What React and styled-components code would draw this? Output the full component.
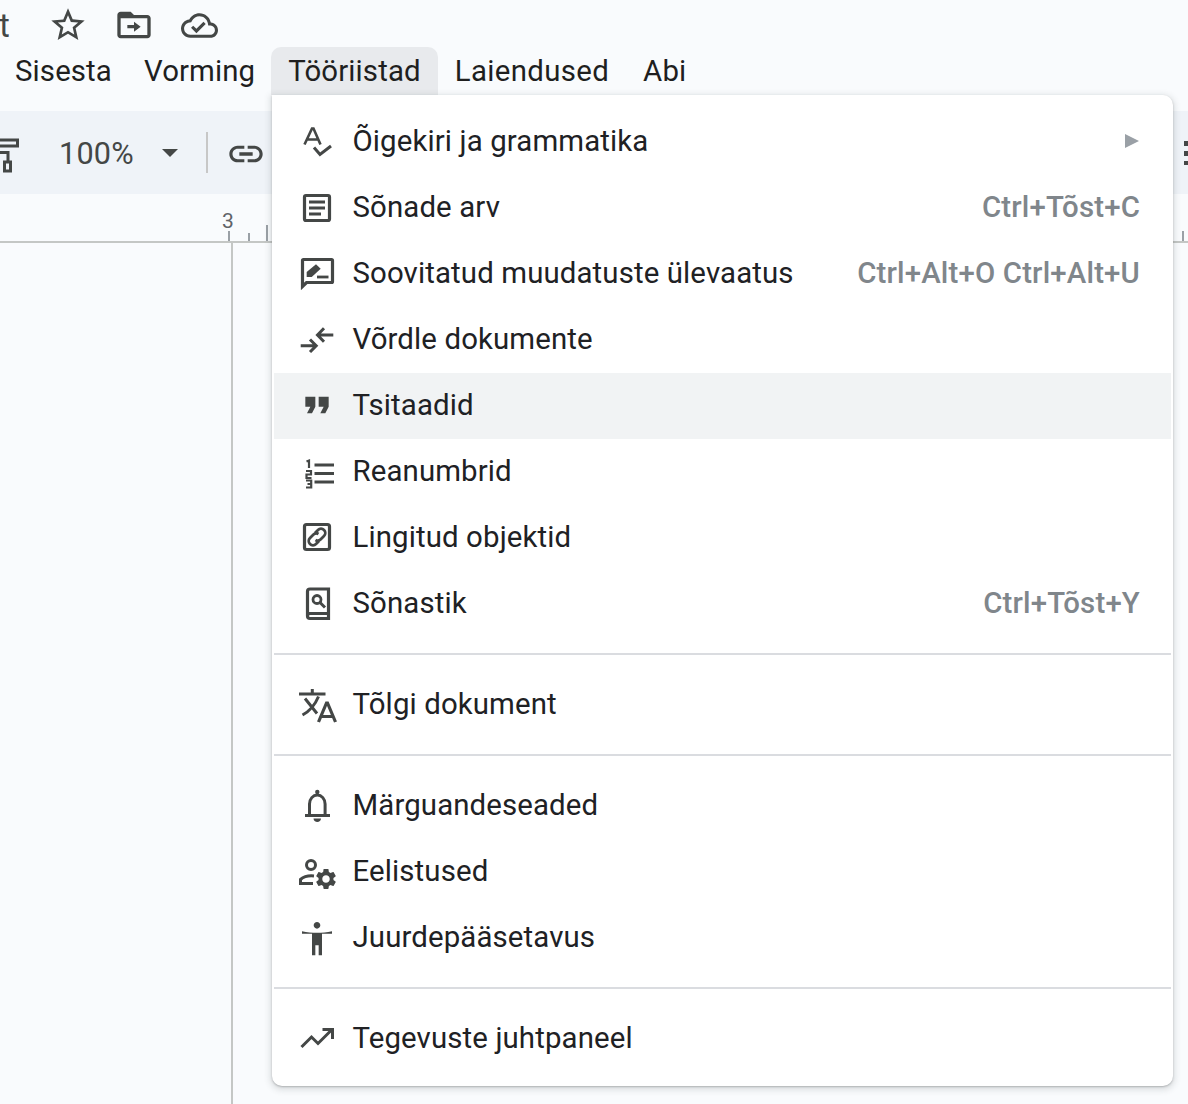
import React from "react";
import styled, { createGlobalStyle } from "styled-components";

const GlobalStyle = createGlobalStyle`
  html, body { margin: 0; padding: 0; background: #f9fbfd; }
  body { font-family: Roboto, "Liberation Sans", sans-serif; }
`;

// --- Page chrome ---
const Page = styled.div`
  position: relative;
  width: 1188px;
  height: 1104px;
  overflow: hidden;
  background: #f9fbfd;
  display: flex;
  flex-direction: column;
`;

const TitleRow = styled.div`
  height: 47px;
  padding-top: 3px;
  box-sizing: border-box;
  display: flex;
  align-items: center;
  flex: none;
`;

const TitleTail = styled.span`
  width: 49px;
  margin-left: -1px;
  font-size: 33px;
  color: #444746;
  flex: none;
`;

const TitleIcon = styled.svg`
  width: ${(p) => p.$w}px;
  height: ${(p) => p.$w}px;
  margin-right: ${(p) => p.$mr}px;
  fill: #444746;
  flex: none;
`;

const MenuBar = styled.div`
  height: 48px;
  margin-left: -1px;
  display: flex;
  flex: none;
`;

const MenuTab = styled.div`
  padding: 0 ${(p) => p.$pad}px;
  display: flex;
  align-items: center;
  font-size: 29.4px;
  letter-spacing: ${(p) => p.$ls}px;
  color: #1f1f1f;
  border-radius: 10px 10px 0 0;
  background: ${(p) => (p.$open ? "#e8eaed" : "transparent")};
`;

const Toolbar = styled.div`
  height: 83px;
  margin-top: 16px;
  background: #eff3f8;
  display: flex;
  align-items: center;
  flex: none;
  position: relative;
`;

const PaintIcon = styled.svg`
  width: 40px;
  height: 40px;
  margin-left: -20px;
  flex: none;
  fill: none;
  stroke: #444746;
  stroke-width: 3;
`;

const Zoom = styled.span`
  margin: 2px 0 0 39px;
  font-size: 30.6px;
  color: #444746;
  letter-spacing: 0.2px;
`;

const Caret = styled.i`
  margin-left: 28px;
  width: 0;
  height: 0;
  border-left: 8px solid transparent;
  border-right: 8px solid transparent;
  border-top: 8px solid #444746;
`;

const ToolDivider = styled.i`
  width: 2px;
  height: 41px;
  margin-left: 28px;
  background: #c7c7c7;
`;

const LinkIcon = styled.svg`
  width: 40px;
  height: 40px;
  margin: 2px 0 0 18px;
  fill: #444746;
  flex: none;
`;

const MoreDots = styled.i`
  margin-left: auto;
  width: 4px;
  height: 24px;
  background: repeating-linear-gradient(#444746 0 5px, transparent 5px 10px);
`;

const Ruler = styled.div`
  height: 47px;
  border-bottom: 2px solid #c4c7c5;
  display: flex;
  align-items: flex-end;
  flex: none;
`;

const RulerNumber = styled.span`
  width: 13px;
  margin-left: 222px;
  margin-bottom: 8px;
  font-size: 21px;
  color: #5f6368;
`;

const Tick = styled.i`
  width: 2px;
  height: ${(p) => p.$h}px;
  margin-left: ${(p) => p.$ml}px;
  background: #9aa0a6;
`;

const Canvas = styled.div`
  flex: 1;
  margin-left: 231px;
  border-left: 2px solid #c4c7c5;
`;

// --- Tools menu ---
const Menu = styled.div`
  position: absolute;
  top: 95px;
  left: 272px;
  width: 901px;
  height: 991px;
  padding: 14px 2px;
  box-sizing: border-box;
  background: #fff;
  border-radius: 0 10px 10px 10px;
  box-shadow: 0 2px 6px 2px rgba(60, 64, 67, 0.15), 0 1px 2px rgba(60, 64, 67, 0.3);
`;

const Item = styled.div`
  height: 66px;
  box-sizing: border-box;
  padding: 0 31px 2px 23px;
  display: flex;
  align-items: center;
  background: ${(p) => (p.$active ? "#f1f3f4" : "transparent")};
`;

const ItemIcon = styled.svg`
  width: 40px;
  height: 40px;
  margin-right: 15.5px;
  flex: none;
  fill: #444746;
`;

const Line = styled.path`
  fill: none;
  stroke: #444746;
  stroke-width: ${(p) => p.$w || 3}px;
`;

const ItemLabel = styled.span`
  flex: 1;
  font-size: 29.4px;
  letter-spacing: 0.12px;
  color: #202124;
  white-space: nowrap;
`;

const Shortcut = styled.span`
  font-size: 29.4px;
  font-weight: 500;
  letter-spacing: 0.17px;
  color: #80868b;
  white-space: nowrap;
`;

const SubArrow = styled.i`
  width: 0;
  height: 0;
  margin-right: 1px;
  border-top: 7px solid transparent;
  border-bottom: 7px solid transparent;
  border-left: 14px solid #9aa0a6;
`;

const Separator = styled.div`
  height: 2px;
  margin: 16px 0 17px;
  background: #dadce0;
`;

// --- Icons (40x40 unless the path comes from a 24 grid) ---
const Spell = () => (
  <ItemIcon viewBox="0 0 40 40">
    <Line $w={2.6} d="M7.500 23.500 15 7.500h1.500L23.500 23.500M10 18.500h11" />
    <Line d="M17 26.500l6 7L34 25" />
  </ItemIcon>
);

const Doc = () => (
  <ItemIcon viewBox="0 0 40 40">
    <rect x="7.500" y="8.500" width="25" height="25" rx="1.500" fill="none" stroke="#444746" strokeWidth="3.200" />
    <Line d="M12 15h16M12 21h16M12 27h12" />
  </ItemIcon>
);

const Review = () => (
  <ItemIcon viewBox="0 0 40 40">
    <Line $w={3.2} d="M5.500 33.500V7.500a1 1 0 0 1 1-1h28a1 1 0 0 1 1 1v21a1 1 0 0 1-1 1H9.500z" />
    <path d="M9.700 24v-5L19 11.300l4.700 4.400-9 8.300z" />
    <Line $w={2.8} d="M20 24h11.500" />
  </ItemIcon>
);

const Compare = () => (
  <ItemIcon viewBox="0 0 40 40">
    <Line d="M3.700 26.700H18M13 20.500l6.200 6.200-6.200 6.300" />
    <Line d="M36.300 16H22M27 9.300l-6.500 6.700 6.500 6.700" />
  </ItemIcon>
);

const Quote = () => (
  <ItemIcon viewBox="0 0 24 24">
    <path d="M6 17h3l2-4V7H5v6h3zm8 0h3l2-4V7h-6v6h3z" />
  </ItemIcon>
);

const Numbers = () => (
  <ItemIcon viewBox="0 0 40 40">
    <Line d="M17.500 14H37M17.500 22.500H37M17.500 31H37" />
    <Line $w={2.2} d="M9.500 10.500l2.500-1v7.500" />
    <Line $w={2.2} d="M9 20h5v3.500H9.500V27H14.500" />
    <Line $w={2.2} d="M9 29.500h5.200v7H9M10.500 33h3.500" />
  </ItemIcon>
);

const Linked = () => (
  <ItemIcon viewBox="0 0 40 40">
    <rect x="7.500" y="7.500" width="25" height="25" rx="2" fill="none" stroke="#444746" strokeWidth="3.200" />
    <Line $w={2.8} d="M18 16l3-3a4 4 0 0 1 6 6l-3.500 3.500a4 4 0 0 1-5 .5" />
    <Line $w={2.8} d="M22 24l-3 3a4 4 0 0 1-6-6l3.500-3.500a4 4 0 0 1 5-.5" />
  </ItemIcon>
);

const Dictionary = () => (
  <ItemIcon viewBox="0 0 40 40">
    <Line $w={3.2} d="M13 30.500a2.500 2.500 0 0 0 0 5h18.500V6H13a2.500 2.500 0 0 0-2.500 2.500v24.500M11 30.500h20" />
    <circle cx="20" cy="16.500" r="4" fill="none" stroke="#444746" strokeWidth="2.800" />
    <Line d="M23 19.500l5 5" />
  </ItemIcon>
);

const Translate = () => (
  <ItemIcon viewBox="0 0 40 40">
    <Line d="M2 10h26.500M15.300 5v5M8 14.500l12 15M21.500 12.500C18 21 12 27.500 5.500 31" />
    <Line $w={3.2} d="M21.500 38l8-19h1l8 19M24.500 32.500h11" />
  </ItemIcon>
);

const Bell = () => (
  <ItemIcon viewBox="0 0 40 40">
    <Line d="M12.500 30V19c0-5 3.500-9 7.800-9s7.800 4 7.800 9v11M8 30.500h25" />
    <circle cx="20.300" cy="7" r="2.200" />
    <path d="M16.500 33.500h7.500c0 2-1.700 3.500-3.700 3.500s-3.800-1.500-3.800-3.500z" />
  </ItemIcon>
);

const Prefs = () => (
  <ItemIcon viewBox="0 0 40 40">
    <circle cx="14" cy="14" r="4.500" fill="none" stroke="#444746" strokeWidth="3" />
    <Line d="M17 25c-5-.5-10 .500-13.500 3.500V32.500H16" />
    <g transform="translate(29 28) scale(1.040) translate(-12 -12)">
      <path d="M19.140 12.940c.040-.3.060-.61.060-.94 0-.32-.020-.64-.070-.94l2.030-1.580c.18-.14.23-.41.12-.61l-1.920-3.320c-.12-.22-.37-.29-.59-.22l-2.390.96c-.5-.38-1.030-.7-1.620-.94l-.36-2.540c-.040-.24-.24-.41-.48-.41h-3.840c-.24 0-.43.17-.47.41l-.36 2.540c-.59.24-1.130.57-1.620.94l-2.390-.96c-.22-.08-.47 0-.59.22L2.740 8.870c-.12.21-.08.47.12.61l2.030 1.580c-.05.3-.09.63-.09.94s.02.64.07.94l-2.030 1.580c-.18.14-.23.41-.12.61l1.920 3.320c.12.22.37.29.59.22l2.390-.96c.5.38 1.030.7 1.620.94l.36 2.540c.05.24.24.41.48.41h3.840c.24 0 .44-.17.47-.41l.36-2.540c.59-.24 1.130-.56 1.620-.94l2.390.96c.22.08.47 0 .59-.22l1.920-3.320c.12-.22.07-.47-.12-.61l-2.010-1.580zM12 15.600c-1.980 0-3.600-1.620-3.600-3.600s1.620-3.600 3.600-3.600 3.600 1.620 3.600 3.600-1.620 3.600-3.600 3.600z" />
    </g>
  </ItemIcon>
);

const Access = () => (
  <ItemIcon viewBox="0 -1 24 24">
    <path d="M12 2c1.100 0 2 .9 2 2s-.9 2-2 2-2-.9-2-2 .9-2 2-2zm9 7h-6v13h-2v-6h-2v6H9V9H3V7.500c3 .8 6 1 9 1s6-.2 9-1V9z" />
  </ItemIcon>
);

const Trend = () => (
  <ItemIcon viewBox="0 0 40 40">
    <Line d="M4.500 29L14.500 19l6.500 6.500L34.500 12" />
    <Line d="M25.500 11.500H35.500V21" />
  </ItemIcon>
);

// --- Data ---
const groups = [
  [
    { icon: Spell, label: "Õigekiri ja grammatika", sub: true },
    { icon: Doc, label: "Sõnade arv", keys: "Ctrl+Tõst+C" },
    { icon: Review, label: "Soovitatud muudatuste ülevaatus", keys: "Ctrl+Alt+O Ctrl+Alt+U" },
    { icon: Compare, label: "Võrdle dokumente" },
    { icon: Quote, label: "Tsitaadid", active: true },
    { icon: Numbers, label: "Reanumbrid" },
    { icon: Linked, label: "Lingitud objektid" },
    { icon: Dictionary, label: "Sõnastik", keys: "Ctrl+Tõst+Y" },
  ],
  [{ icon: Translate, label: "Tõlgi dokument" }],
  [
    { icon: Bell, label: "Märguandeseaded" },
    { icon: Prefs, label: "Eelistused" },
    { icon: Access, label: "Juurdepääsetavus" },
  ],
  [{ icon: Trend, label: "Tegevuste juhtpaneel" }],
];

const tabs = [
  { label: "Sisesta", pad: 16, ls: 0.12 },
  { label: "Vorming", pad: 16, ls: 0.12 },
  { label: "Tööriistad", pad: 17, ls: 0.12, open: true },
  { label: "Laiendused", pad: 17, ls: 0.35 },
  { label: "Abi", pad: 17, ls: 0.12 },
];

const App = () => (
  <Page>
    <GlobalStyle />
    <TitleRow>
      <TitleTail>t</TitleTail>
      <TitleIcon viewBox="0 0 24 24" $w={40} $mr={26}>
        <path d="M22 9.240l-7.190-.62L12 2 9.190 8.630 2 9.240l5.460 4.730L5.820 21 12 17.270 18.180 21l-1.630-7.030L22 9.240zM12 15.400l-3.760 2.270 1-4.280-3.320-2.880 4.380-.38L12 6.100l1.710 4.040 4.380.38-3.320 2.880 1 4.280L12 15.400z" />
      </TitleIcon>
      <TitleIcon viewBox="0 0 24 24" $w={40} $mr={27}>
        <path d="M20 6h-8l-2-2H4c-1.100 0-1.990.9-1.990 2L2 18c0 1.100.9 2 2 2h16c1.100 0 2-.9 2-2V8c0-1.100-.9-2-2-2zm0 12H4V8h16v10zm-8-4H8v-2h4V10l4 3-4 3v-2z" />
      </TitleIcon>
      <TitleIcon viewBox="0 0 24 24" $w={37} $mr={0}>
        <path d="M19.350 10.040C18.670 6.590 15.640 4 12 4 9.110 4 6.600 5.640 5.350 8.040 2.340 8.360 0 10.910 0 14c0 3.310 2.690 6 6 6h13c2.760 0 5-2.240 5-5 0-2.640-2.050-4.780-4.650-4.960zM19 18H6c-2.210 0-4-1.790-4-4 0-2.050 1.530-3.760 3.560-3.970l1.070-.11.5-.95C8.080 7.140 9.940 6 12 6c2.620 0 4.880 1.860 5.390 4.430l.3 1.500 1.530.11c1.560.1 2.780 1.410 2.780 2.960 0 1.650-1.350 3-3 3zm-9-3.820l-2.090-2.090L6.500 13.500 10 17l6.010-6.010-1.410-1.410z" />
      </TitleIcon>
    </TitleRow>

    <MenuBar>
      {tabs.map((t) => (
        <MenuTab key={t.label} $pad={t.pad} $ls={t.ls} $open={t.open}>{t.label}</MenuTab>
      ))}
    </MenuBar>

    <Toolbar>
      <PaintIcon viewBox="0 0 40 40">
        <path d="M0 7H37.500V13H0M20 19.500H28V27.500M24.500 29H30.500V38H24.500z" />
      </PaintIcon>
      <Zoom>100%</Zoom>
      <Caret />
      <ToolDivider />
      <LinkIcon viewBox="0 0 24 24">
        <path d="M3.900 12c0-1.710 1.390-3.100 3.100-3.100h4V7H7c-2.760 0-5 2.240-5 5s2.240 5 5 5h4v-1.900H7c-1.710 0-3.100-1.390-3.100-3.100zM8 13h8v-2H8v2zm9-6h-4v1.900h4c1.710 0 3.100 1.390 3.100 3.100s-1.390 3.100-3.100 3.100h-4V17h4c2.760 0 5-2.240 5-5s-2.240-5-5-5z" />
      </LinkIcon>
      <MoreDots />
    </Toolbar>

    <Ruler>
      <RulerNumber>3</RulerNumber>
      <Tick $h={10} $ml={-7} />
      <Tick $h={8} $ml={18} />
      <Tick $h={16} $ml={16} />
      <Tick $h={10} $ml={914} />
    </Ruler>

    <Canvas />

    <Menu>
      {groups.map((group, i) => (
        <React.Fragment key={i}>
          {i > 0 && <Separator />}
          {group.map(({ icon: Icon, label, keys, sub, active }) => (
            <Item key={label} $active={active}>
              <Icon />
              <ItemLabel>{label}</ItemLabel>
              {keys && <Shortcut>{keys}</Shortcut>}
              {sub && <SubArrow />}
            </Item>
          ))}
        </React.Fragment>
      ))}
    </Menu>
  </Page>
);

export default App;
